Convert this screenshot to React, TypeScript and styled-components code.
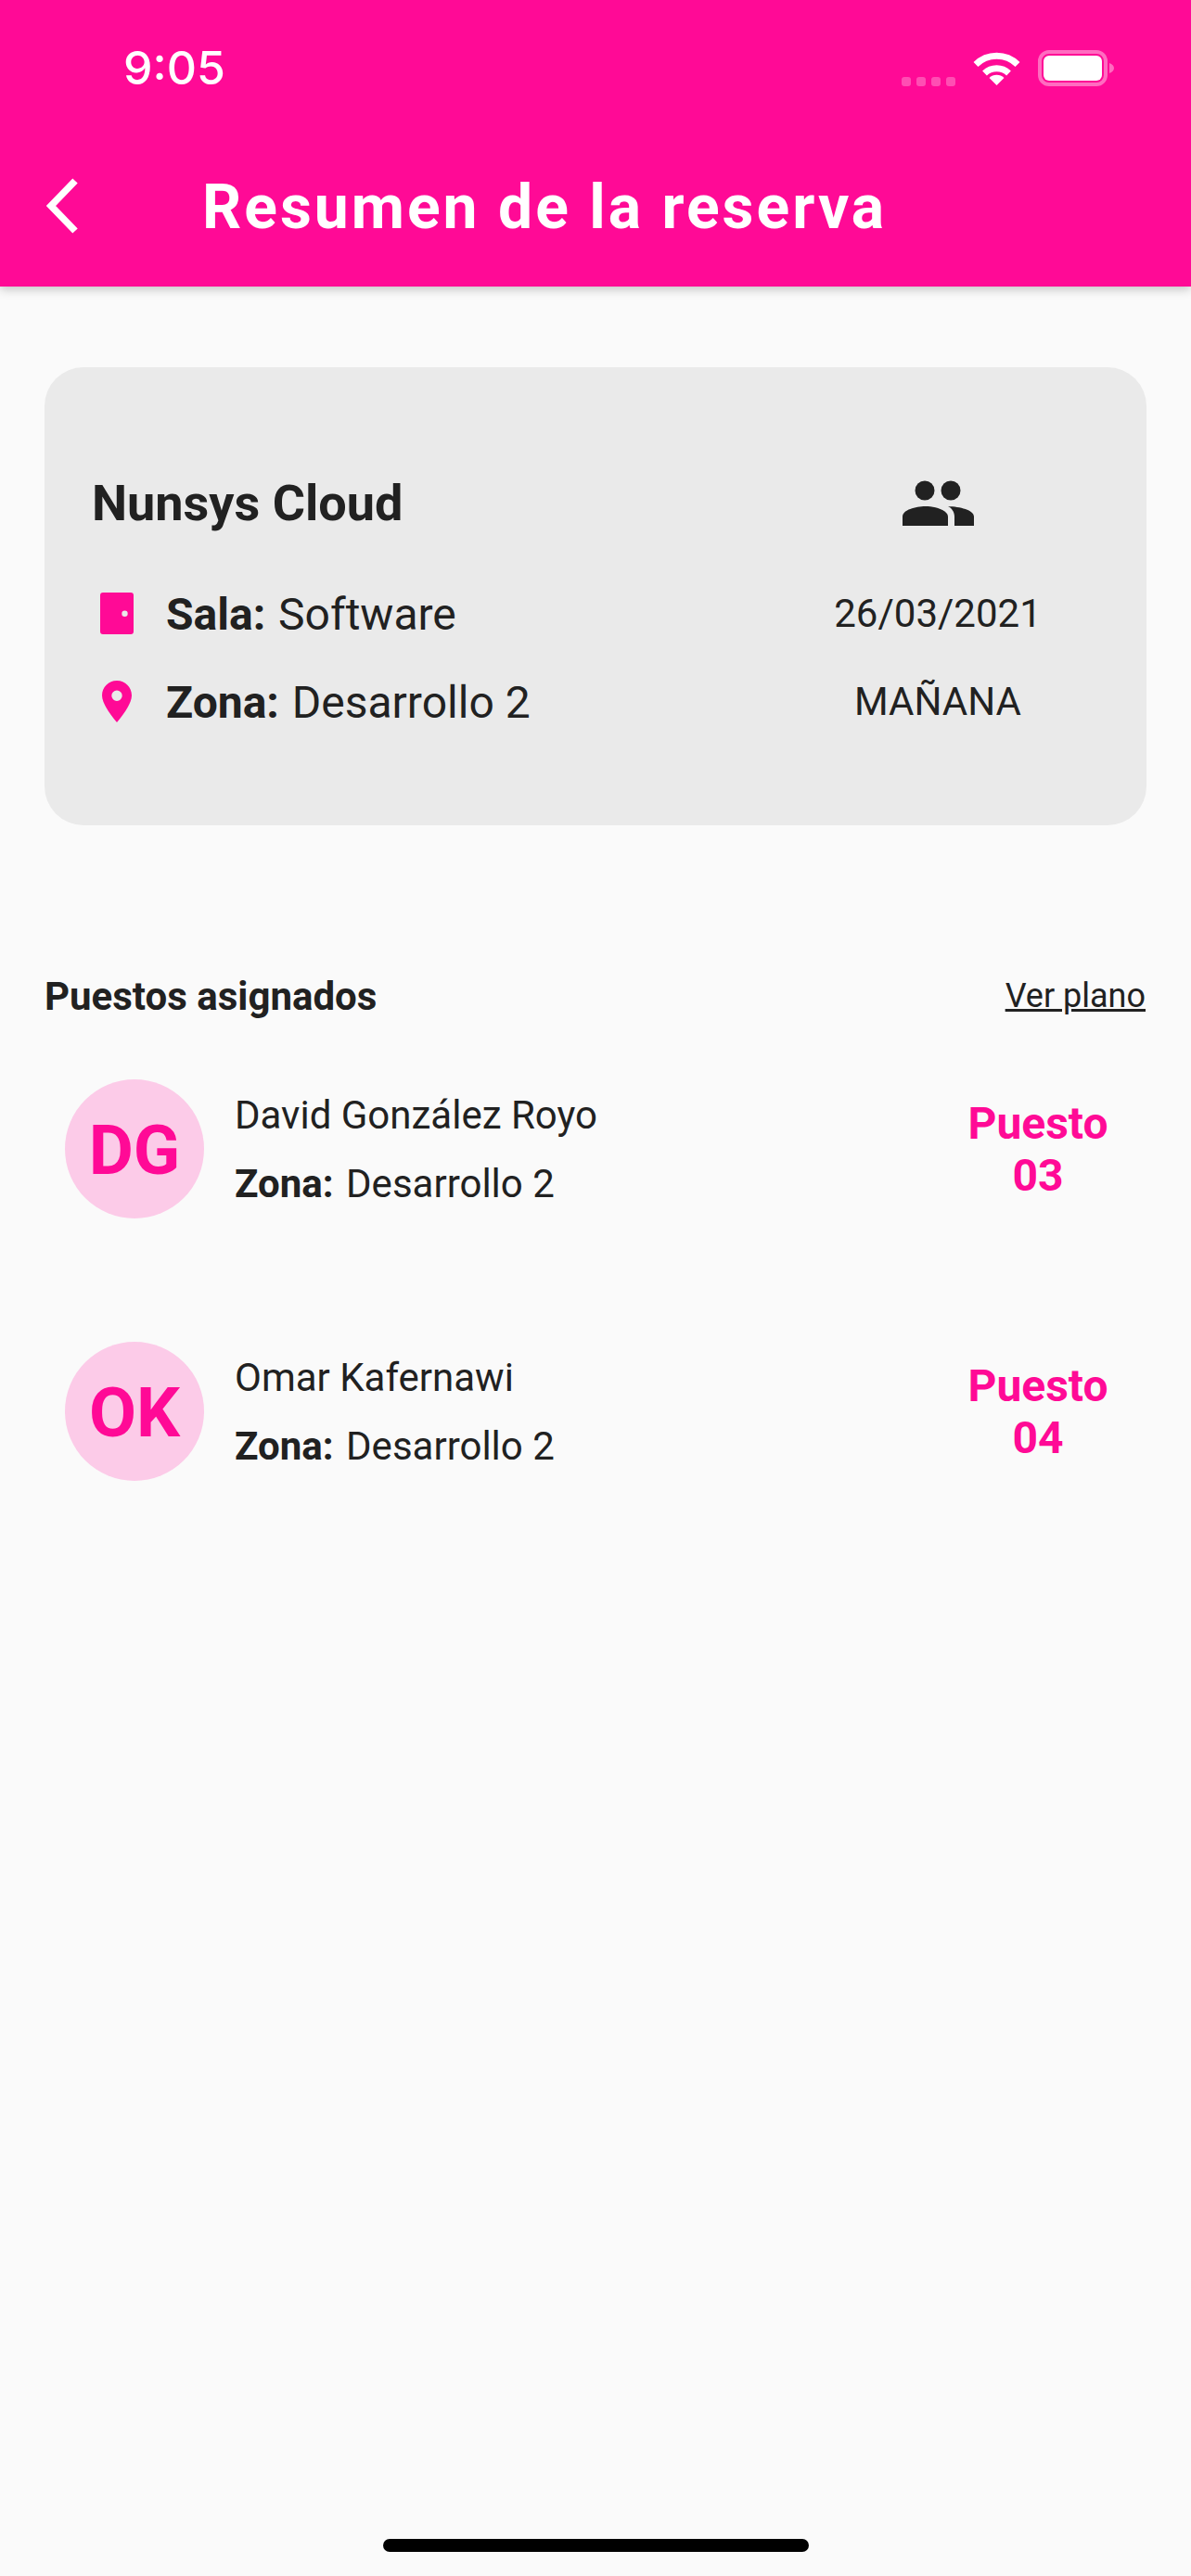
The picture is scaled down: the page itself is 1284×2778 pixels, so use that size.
import styled, { createGlobalStyle } from 'styled-components';

const pink = '#FF0A96';
const ink = '#212121';

const seats = [
	{ initials: 'DG', name: 'David González Royo', zone: 'Desarrollo 2', seat: '03' },
	{ initials: 'OK', name: 'Omar Kafernawi', zone: 'Desarrollo 2', seat: '04' },
];

export default function App() {
	return (
		<Screen>
			<GlobalStyle />
			<Header>
				<StatusBar>
					<Clock>9:05</Clock>
					<StatusIcons>
						<SignalDots>
							<i />
							<i />
							<i />
							<i />
						</SignalDots>
						<svg width='51' height='37' viewBox='0 0 51 37' fill='none'>
							<path d='M3 14.5 A32 32 0 0 1 48 14.5' stroke='white' strokeWidth='7' />
							<path d='M12.5 24 A19 19 0 0 1 38.5 24' stroke='white' strokeWidth='7' />
							<path d='M25.5 37 L17.5 29 A11.5 11.5 0 0 1 33.5 29 Z' fill='white' />
						</svg>
						<svg width='83' height='39' viewBox='0 0 83 39' fill='none'>
							<rect x='2' y='2' width='71' height='35' rx='10' stroke='white' strokeOpacity='0.4' strokeWidth='4' />
							<rect x='6' y='6' width='63' height='27' rx='6' fill='white' />
							<path d='M77 14 C80 15 82 17 82 19.5 C82 22 80 24 77 25 Z' fill='white' fillOpacity='0.4' />
						</svg>
					</StatusIcons>
				</StatusBar>
				<TitleRow>
					<svg width='36' height='60' viewBox='0 0 36 60' fill='none'>
						<path d='M32 3 L6 30 L32 57' stroke='white' strokeWidth='7.5' />
					</svg>
					<Title>Resumen de la reserva</Title>
				</TitleRow>
			</Header>

			<Main>
				<Card>
					<RoomName>Nunsys Cloud</RoomName>
					<CardAside>
						<svg width='77' height='49' viewBox='0 0 77 49' fill={ink}>
							<circle cx='24' cy='11' r='10.5' />
							<circle cx='52' cy='11' r='10.5' />
							<path d='M0 49 V39 C0 32 14 28 24.5 28 C35 28 49 32 49 39 V49 Z' />
							<path d='M49 28 C62 28.5 77 32 77 39 V49 H56 V39 C56 34 53 30 49 28 Z' />
						</svg>
					</CardAside>
					<InfoLine>
						<IconSlot>
							<svg width='36' height='45' viewBox='0 0 36 45'>
								<path
									fillRule='evenodd'
									fill={pink}
									d='M3 0 H33 A3 3 0 0 1 36 3 V42 A3 3 0 0 1 33 45 H3 A3 3 0 0 1 0 42 V3 A3 3 0 0 1 3 0 Z M26.5 19.5 A3.2 3.2 0 1 0 26.5 25.9 A3.2 3.2 0 1 0 26.5 19.5 Z'
								/>
							</svg>
						</IconSlot>
						<InfoText>
							<b>Sala:</b> Software
						</InfoText>
					</InfoLine>
					<CardAside>
						<AsideText>26/03/2021</AsideText>
					</CardAside>
					<InfoLine>
						<IconSlot>
							<svg width='32' height='45' viewBox='0 0 32 45'>
								<path
									fillRule='evenodd'
									fill={pink}
									d='M16 0 C25 0 32 7 32 16 C32 25 22 38 16 45 C10 38 0 25 0 16 C0 7 7 0 16 0 Z M16 10.5 A5.7 5.7 0 1 0 16 21.9 A5.7 5.7 0 1 0 16 10.5 Z'
								/>
							</svg>
						</IconSlot>
						<InfoText>
							<b>Zona:</b> Desarrollo 2
						</InfoText>
					</InfoLine>
					<CardAside>
						<AsideText>MAÑANA</AsideText>
					</CardAside>
				</Card>

				<SectionHead>
					<SectionTitle>Puestos asignados</SectionTitle>
					<PlanLink>Ver plano</PlanLink>
				</SectionHead>

				<SeatList>
					{seats.map((s) => (
						<SeatRow key={s.initials}>
							<Avatar>{s.initials}</Avatar>
							<Person>
								<div>{s.name}</div>
								<div>
									<b>Zona:</b> {s.zone}
								</div>
							</Person>
							<SeatLabel>
								Puesto
								<br />
								{s.seat}
							</SeatLabel>
						</SeatRow>
					))}
				</SeatList>
			</Main>

			<HomeIndicator />
		</Screen>
	);
}

const GlobalStyle = createGlobalStyle`
	html, body {
		margin: 0;
		padding: 0;
		background: #fafafa;
	}
	* {
		box-sizing: border-box;
	}
`;

const Screen = styled.div`
	position: relative;
	display: flex;
	flex-direction: column;
	width: 1284px;
	height: 2778px;
	overflow: hidden;
	background: #fafafa;
	color: ${ink};
	font-family: Roboto, 'Liberation Sans', sans-serif;
`;

const Header = styled.header`
	display: flex;
	flex-direction: column;
	height: 309px;
	flex-shrink: 0;
	background: ${pink};
	box-shadow: 0 3px 10px rgba(0, 0, 0, 0.22);
`;

const StatusBar = styled.div`
	display: flex;
	justify-content: space-between;
	align-items: center;
	height: 146px;
	padding: 0 82px 0 133px;
`;

const Clock = styled.span`
	font-family: Inter, Roboto, sans-serif;
	font-size: 50px;
	font-weight: 550;
	color: #fff;
`;

const StatusIcons = styled.div`
	display: flex;
	align-items: center;
	gap: 19px;
`;

const SignalDots = styled.div`
	display: flex;
	gap: 6px;
	align-self: flex-end;

	i {
		display: block;
		width: 10px;
		height: 10px;
		border-radius: 3px;
		background: rgba(255, 255, 255, 0.28);
	}
`;

const TitleRow = styled.div`
	display: flex;
	align-items: center;
	gap: 133px;
	padding-left: 49px;
	height: 152px;
`;

const Title = styled.h1`
	margin: 0;
	padding-top: 2px;
	font-size: 66px;
	font-weight: 700;
	letter-spacing: 3px;
	color: #fff;
`;

const Main = styled.main`
	display: flex;
	flex-direction: column;
	padding: 87px 48px 0;
`;

const Card = styled.section`
	display: grid;
	grid-template-columns: 1fr 252px;
	grid-template-rows: 143px 95px 95px;
	height: 494px;
	padding: 75px 99px 0 51px;
	border-radius: 42px;
	background: #eaeaea;
`;

const RoomName = styled.h2`
	align-self: center;
	margin: 0;
	font-size: 54px;
	font-weight: 700;
`;

const CardAside = styled.div`
	display: flex;
	align-items: center;
	justify-content: center;
`;

const AsideText = styled.span`
	font-size: 42px;
	font-weight: 400;
`;

const InfoLine = styled.div`
	display: flex;
	align-items: center;
`;

const IconSlot = styled.span`
	display: flex;
	justify-content: center;
	width: 36px;
	margin: 0 35px 0 9px;
`;

const InfoText = styled.span`
	padding-top: 1px;
	font-size: 48px;
	font-weight: 400;

	b {
		margin-right: 2px;
		font-weight: 700;
	}
`;

const SectionHead = styled.div`
	display: flex;
	justify-content: space-between;
	align-items: center;
	height: 50px;
	margin-top: 159px;
`;

const SectionTitle = styled.h3`
	margin: 0;
	font-size: 42px;
	font-weight: 700;
`;

const PlanLink = styled.span`
	margin-right: 1px;
	font-size: 36px;
	font-weight: 400;
	text-decoration: underline;
`;

const SeatList = styled.div`
	display: flex;
	flex-direction: column;
	gap: 133px;
	margin-top: 65px;
`;

const SeatRow = styled.div`
	display: flex;
	align-items: center;
	padding-left: 22px;
`;

const Avatar = styled.div`
	display: flex;
	align-items: center;
	justify-content: center;
	width: 150px;
	height: 150px;
	flex-shrink: 0;
	border-radius: 50%;
	background: #fccbe8;
	color: ${pink};
	font-size: 74px;
	font-weight: 700;
	padding-top: 2px;
`;

const Person = styled.div`
	flex: 1;
	margin-left: 33px;
	padding-top: 2px;
	font-size: 42px;
	font-weight: 400;
	line-height: 74px;

	b {
		margin-right: 3px;
		font-weight: 700;
	}
`;

const SeatLabel = styled.div`
	width: 234px;
	padding-top: 1px;
	color: ${pink};
	font-size: 48px;
	font-weight: 700;
	line-height: 56px;
	text-align: center;
`;

const HomeIndicator = styled.div`
	position: absolute;
	left: 413px;
	bottom: 26px;
	width: 459px;
	height: 14px;
	border-radius: 7px;
	background: #000;
`;
